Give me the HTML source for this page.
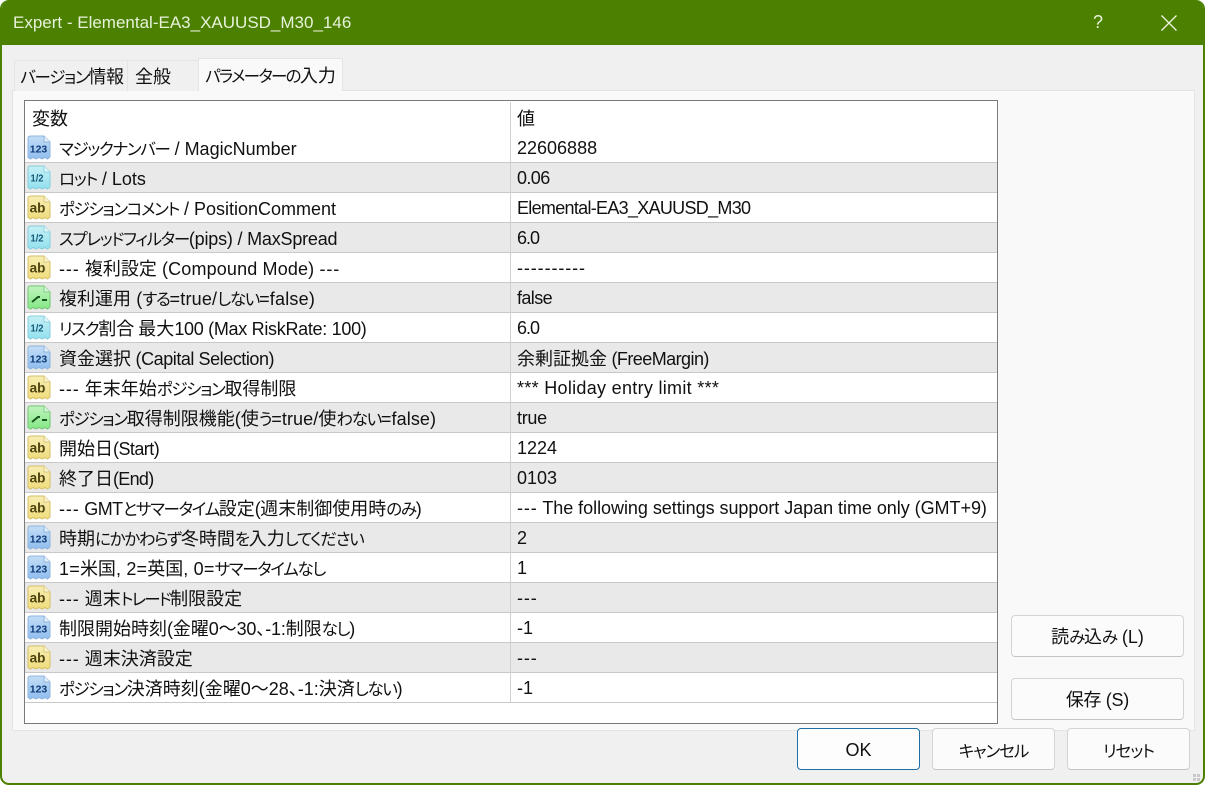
<!DOCTYPE html>
<html><head><meta charset="utf-8"><style>
*{box-sizing:border-box}
html,body{margin:0;padding:0;width:1205px;height:785px;overflow:hidden;background:#fff}
body{font:18px "Liberation Sans","Noto Sans CJK JP",sans-serif;color:#111}
i{font-style:normal;font-size:16.5px;letter-spacing:-1.3px;font-feature-settings:"palt";font-family:"Noto Sans CJK JP",sans-serif}
b{font-weight:400;font-size:18px;letter-spacing:0;font-family:"Noto Sans CJK JP",sans-serif}
b.p{font-feature-settings:"palt"}
em{font-style:normal;letter-spacing:.9px}
#win{position:absolute;left:0;top:0;width:1205px;height:785px;background:#f0f0f0;border:2px solid #4b8000;border-top:0;border-radius:9px;overflow:hidden}
#tb{position:absolute;left:-2px;top:0;width:1205px;height:45px;background:#4b8000;color:#e8f2da;font-size:17px;line-height:45px;padding-left:13px}
.a{position:absolute;white-space:nowrap}
.tab{position:absolute;height:31px;line-height:31px;text-align:center;background:#f0f0f0;border:1px solid #e4e4e4;border-bottom:0;white-space:nowrap}
#page{position:absolute;left:12px;top:90px;width:1183px;height:641px;background:#f9f9f9;border:1px solid #e4e4e4;border-top:1px solid #e2e2e2}
#list{position:absolute;left:24px;top:100px;width:974px;height:624px;background:#fff;border:1px solid #7a7a7a}
.r{position:absolute;left:25px;width:972px;height:30px;border-bottom:1px solid #c8c8c8;line-height:30px;background:#fff}
.r.g{background:#e9e9e9}
.r span{position:absolute;white-space:nowrap;top:0}
.r .n{left:34px}
.r .v{left:492px}
.r svg{position:absolute;left:2px;top:2px}
#sep{position:absolute;left:510px;top:102px;width:1px;height:600px;background:#d0d0d0}
.b{position:absolute;height:42px;background:#fbfbfb;border:1px solid #d4d4d4;border-bottom-color:#c4c4c4;border-radius:4px;text-align:center;line-height:41px;color:#111;white-space:nowrap}
</style></head><body>
<svg width="0" height="0" style="position:absolute">
<defs>
<linearGradient id="g1" x1="0" y1="0" x2="0" y2="1"><stop offset="0" stop-color="#c4def6"/><stop offset="1" stop-color="#8fbdee"/></linearGradient>
<linearGradient id="g2" x1="0" y1="0" x2="0" y2="1"><stop offset="0" stop-color="#c6f0f6"/><stop offset="1" stop-color="#93e0ee"/></linearGradient>
<linearGradient id="g3" x1="0" y1="0" x2="0" y2="1"><stop offset="0" stop-color="#f8eeb4"/><stop offset="1" stop-color="#f0dc7c"/></linearGradient>
<linearGradient id="g4" x1="0" y1="0" x2="0" y2="1"><stop offset="0" stop-color="#c0f4c0"/><stop offset="1" stop-color="#84e884"/></linearGradient>
<path id="doc" d="M1 3.5Q1 1 3.5 1H17L23 7V22L20.5 24L18 22.5L15 24L12 22.5L9 24L6 22.5L3.5 24L1 22.5Z"/>
<g id="i1"><use href="#doc" fill="url(#g1)" stroke="#8fb4dc"/><path d="M17 1V7H23" fill="#e4f0fb" stroke="#8fb6de"/><text x="11.5" y="17.5" font-size="10.5" font-weight="700" text-anchor="middle" fill="#0f3a78" font-family="Liberation Sans">123</text></g>
<g id="i2"><use href="#doc" fill="url(#g2)" stroke="#86ccdc"/><path d="M17 1V7H23" fill="#e4f8fb" stroke="#8fd4e0"/><text x="10" y="16.5" font-size="10.5" font-weight="700" text-anchor="middle" fill="#125a78" font-family="Liberation Sans" textLength="13" lengthAdjust="spacingAndGlyphs">1/2</text></g>
<g id="i3"><use href="#doc" fill="url(#g3)" stroke="#d4bf68"/><path d="M17 1V7H23" fill="#fbf5cf" stroke="#d8c77c"/><text x="10.5" y="17.5" font-size="13.5" font-weight="700" text-anchor="middle" fill="#4b4210" font-family="Liberation Sans">ab</text></g>
<g id="i4"><use href="#doc" fill="url(#g4)" stroke="#74c474"/><path d="M17 1V7H23" fill="#d9f8d9" stroke="#84cf84"/><path d="M5 17L11 12H13M15 15H20" fill="none" stroke="#14561c" stroke-width="2"/></g>
</defs></svg>
<div id="win">
<div id="tb">Expert - Elemental-EA3_XAUUSD_M30_146</div>
</div>
<div class="a" style="left:1093px;top:12px;font-size:18px;color:#e8f2da">?</div>
<svg class="a" style="left:1160px;top:14px" width="18" height="18"><path d="M1.5 1.5L16.5 16.5M16.5 1.5L1.5 16.5" stroke="#eef5e2" stroke-width="1.3" fill="none"/></svg>

<div id="page"></div>
<div class="tab" style="left:14px;top:60px;width:114px;padding-left:2px"><i>バージョン</i><b style="letter-spacing:-.3px">情報</b></div>
<div class="tab" style="left:127px;top:60px;width:72px;text-align:left;padding-left:7px"><b>全般</b></div>
<div class="tab" style="left:198px;top:58px;width:145px;height:33px;background:#f9f9f9;z-index:2;line-height:33px"><i style="letter-spacing:-1.7px">パラメーターの</i><b>入力</b></div>

<div id="list"></div>
<div class="r" style="top:102px;height:31px;border-bottom:0"><span style="left:7px;line-height:32px"><b>変数</b></span><span class="v" style="line-height:32px"><b>値</b></span></div>
<div class="r" style="top:133px"><svg width="24" height="26"><use href="#i1"/></svg><span class="n"><i>マジックナンバー</i> / MagicNumber</span><span class="v">22606888</span></div>
<div class="r g" style="top:163px"><svg width="24" height="26"><use href="#i2"/></svg><span class="n"><i>ロット</i> / Lots</span><span class="v" style="letter-spacing:-.6px">0.06</span></div>
<div class="r" style="top:193px"><svg width="24" height="26"><use href="#i3"/></svg><span class="n"><i>ポジションコメント</i> / PositionComment</span><span class="v" style="letter-spacing:-.7px">Elemental-EA3_XAUUSD_M30</span></div>
<div class="r g" style="top:223px"><svg width="24" height="26"><use href="#i2"/></svg><span class="n" style="letter-spacing:-.2px"><i>スプレッドフィルター</i>(pips) / MaxSpread</span><span class="v" style="letter-spacing:-1px">6.0</span></div>
<div class="r" style="top:253px"><svg width="24" height="26"><use href="#i3"/></svg><span class="n" style="letter-spacing:.15px"><em>---</em> <b>複利設定</b> (Compound Mode) <em>---</em></span><span class="v"><em>----------</em></span></div>
<div class="r g" style="top:283px"><svg width="24" height="26"><use href="#i4"/></svg><span class="n" style="letter-spacing:.2px"><b>複利運用</b> (<i>する</i>=true/<i>しない</i>=false)</span><span class="v" style="letter-spacing:-.6px">false</span></div>
<div class="r" style="top:313px"><svg width="24" height="26"><use href="#i2"/></svg><span class="n" style="letter-spacing:-.3px"><i>リスク</i><b>割合 最大</b>100 (Max RiskRate: 100)</span><span class="v" style="letter-spacing:-1px">6.0</span></div>
<div class="r g" style="top:343px"><svg width="24" height="26"><use href="#i1"/></svg><span class="n" style="letter-spacing:-.45px"><b>資金選択</b> (Capital Selection)</span><span class="v" style="letter-spacing:-.55px"><b>余剰証拠金</b> (FreeMargin)</span></div>
<div class="r" style="top:373px"><svg width="24" height="26"><use href="#i3"/></svg><span class="n"><em>---</em> <b>年末年始</b><i>ポジション</i><b>取得制限</b></span><span class="v" style="letter-spacing:.3px">*** Holiday entry limit ***</span></div>
<div class="r g" style="top:403px"><svg width="24" height="26"><use href="#i4"/></svg><span class="n" style="letter-spacing:.1px"><i>ポジション</i><b>取得制限機能</b>(<b>使</b><i>う</i>=true/<b>使</b><i>わない</i>=false)</span><span class="v" style="letter-spacing:-.3px">true</span></div>
<div class="r" style="top:433px"><svg width="24" height="26"><use href="#i3"/></svg><span class="n" style="letter-spacing:-.55px"><b>開始日</b>(Start)</span><span class="v">1224</span></div>
<div class="r g" style="top:463px"><svg width="24" height="26"><use href="#i3"/></svg><span class="n" style="letter-spacing:-.7px"><b>終了日</b>(End)</span><span class="v">0103</span></div>
<div class="r" style="top:493px"><svg width="24" height="26"><use href="#i3"/></svg><span class="n" style="letter-spacing:-.5px"><em>---</em> GMT<i>とサマータイム</i><b>設定</b>(<b>週末制御使用時</b><i>のみ</i>)</span><span class="v" style="letter-spacing:-.04px"><em>---</em> The following settings support Japan time only (GMT+9)</span></div>
<div class="r g" style="top:523px"><svg width="24" height="26"><use href="#i1"/></svg><span class="n"><b>時期</b><i>にかかわらず</i><b>冬時間</b><i>を</i><b>入力</b><i>してください</i></span><span class="v">2</span></div>
<div class="r" style="top:553px"><svg width="24" height="26"><use href="#i1"/></svg><span class="n" style="letter-spacing:.2px">1=<b>米国</b>, 2=<b>英国</b>, 0=<i>サマータイムなし</i></span><span class="v">1</span></div>
<div class="r g" style="top:583px"><svg width="24" height="26"><use href="#i3"/></svg><span class="n"><em>---</em> <b>週末</b><i style="letter-spacing:-1.8px">トレード</i><b>制限設定</b></span><span class="v"><em>---</em></span></div>
<div class="r" style="top:613px"><svg width="24" height="26"><use href="#i1"/></svg><span class="n" style="letter-spacing:-.2px"><b>制限開始時刻</b>(<b>金曜</b>0<b>～</b>30<b class="p">、</b>-1:<b>制限</b><i>なし</i>)</span><span class="v">-1</span></div>
<div class="r g" style="top:643px"><svg width="24" height="26"><use href="#i3"/></svg><span class="n"><em>---</em> <b>週末決済設定</b></span><span class="v"><em>---</em></span></div>
<div class="r" style="top:673px"><svg width="24" height="26"><use href="#i1"/></svg><span class="n"><i>ポジション</i><b>決済時刻</b>(<b>金曜</b>0<b>～</b>28<b class="p">、</b>-1:<b>決済</b><i>しない</i>)</span><span class="v">-1</span></div>
<div id="sep"></div>

<div class="b" style="left:1011px;top:615px;width:173px"><b>読</b><i>み</i><b>込</b><i>み</i> (L)</div>
<div class="b" style="left:1011px;top:678px;width:173px;letter-spacing:-.2px"><b style="letter-spacing:-.5px">保存</b> (S)</div>
<div class="b" style="left:797px;top:728px;width:123px;border-color:#1f6ea8;background:#fdfdfd;line-height:42px">OK</div>
<div class="b" style="left:932px;top:728px;width:123px;line-height:42px"><i style="letter-spacing:-1px">キャンセル</i></div>
<div class="b" style="left:1067px;top:728px;width:123px;line-height:42px"><i style="letter-spacing:-1px">リセット</i></div>
<svg class="a" style="left:1192px;top:773px" width="10" height="10"><path d="M1 1h3v3H1zM5 1h3v3H5zM1 5h3v3H1zM5 5h3v3H5z" fill="#c8c8c8"/></svg>
</body></html>
